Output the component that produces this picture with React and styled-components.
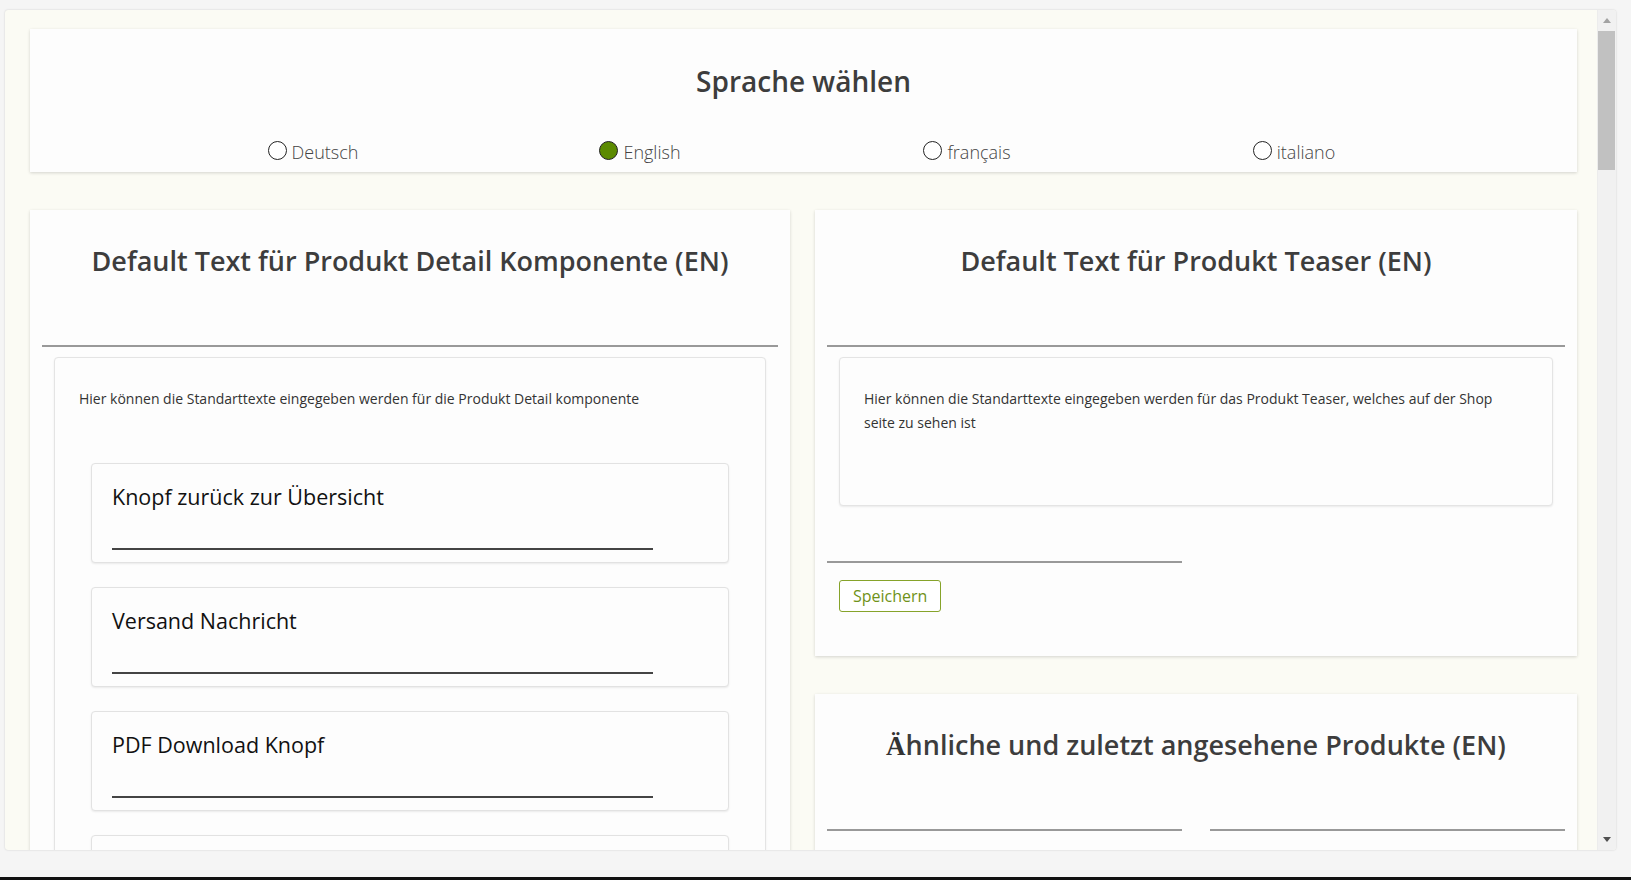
import React from "react";
import styled, { createGlobalStyle } from "styled-components";

const GlobalStyle = createGlobalStyle`
  html, body {
    margin: 0;
    padding: 0;
    height: 100%;
    background: #f5f5f5;
    font-family: "Open Sans", "Liberation Sans", sans-serif;
  }
  #root {
    height: 100%;
  }
  * {
    box-sizing: border-box;
  }
`;

const languages = [
  { label: "Deutsch", checked: false },
  { label: "English", checked: true },
  { label: "français", checked: false },
  { label: "italiano", checked: false },
];

const detailFields = [
  "Knopf zurück zur Übersicht",
  "Versand Nachricht",
  "PDF Download Knopf",
  "",
];

const App = () => {
  return (
    <>
      <GlobalStyle />
      <Page>
        <Frame>
          <Content>
            <LanguageCard>
              <LanguageTitle>Sprache wählen</LanguageTitle>
              <RadioRow>
                {languages.map(lang => (
                  <RadioItem key={lang.label}>
                    <RadioDot checked={lang.checked} />
                    <RadioLabel>{lang.label}</RadioLabel>
                  </RadioItem>
                ))}
              </RadioRow>
            </LanguageCard>

            <Columns>
              <Column>
                <Card>
                  <CardHeader>
                    <CardTitle>Default Text für Produkt Detail Komponente (EN)</CardTitle>
                  </CardHeader>
                  <Divider />
                  <InnerBox>
                    <Description>
                      Hier können die Standarttexte eingegeben werden für die Produkt Detail komponente
                    </Description>
                    <FieldList>
                      {detailFields.map((label, index) => (
                        <FieldCard key={index}>
                          <FieldLabel>{label}</FieldLabel>
                          <FieldLine />
                        </FieldCard>
                      ))}
                    </FieldList>
                  </InnerBox>
                </Card>
              </Column>

              <Column>
                <Card bottom="44px">
                  <CardHeader>
                    <CardTitle>Default Text für Produkt Teaser (EN)</CardTitle>
                  </CardHeader>
                  <Divider />
                  <InnerBox tall>
                    <Description>
                      Hier können die Standarttexte eingegeben werden für das Produkt Teaser, welches auf der Shop seite zu sehen ist
                    </Description>
                  </InnerBox>
                  <HalfRow top="55px">
                    <HalfLine />
                  </HalfRow>
                  <SaveButton>Speichern</SaveButton>
                </Card>

                <Card bottom="60px">
                  <CardHeader>
                    <CardTitle>
                      <SerifGlyph>Ä</SerifGlyph>hnliche und zuletzt angesehene Produkte (EN)
                    </CardTitle>
                  </CardHeader>
                  <HalfRow>
                    <HalfLine />
                    <HalfLine />
                  </HalfRow>
                </Card>
              </Column>
            </Columns>
          </Content>

          <Scrollbar>
            <ScrollArrow up />
            <ScrollThumb />
            <ScrollTrack />
            <ScrollArrow />
          </Scrollbar>
        </Frame>
        <BottomBar />
      </Page>
    </>
  );
};

const Page = styled.div`
  height: 100%;
  display: flex;
  flex-direction: column;
  padding: 10px 15px 0 5px;
`;

const Frame = styled.div`
  height: 840px;
  display: flex;
  background: #fbfbf4;
  border-radius: 3px;
  box-shadow: 0 0 2px rgba(0, 0, 0, 0.18);
  overflow: hidden;
`;

const Content = styled.div`
  flex: 1;
  overflow: hidden;
  padding: 19px 20px 0 25px;
`;

const LanguageCard = styled.section`
  background: #fdfdfd;
  box-shadow: 0 1px 3px rgba(0, 0, 0, 0.16);
  height: 143px;
  padding-top: 32px;
  text-align: center;
`;

const LanguageTitle = styled.h1`
  margin: 0;
  font-size: 28px;
  line-height: 40px;
  font-weight: 600;
  color: #3d3d3d;
`;

const RadioRow = styled.div`
  width: 1308px;
  margin: 39px auto 0;
  display: grid;
  grid-template-columns: repeat(4, 1fr);
`;

const RadioItem = styled.label`
  display: flex;
  align-items: center;
  justify-content: center;
  gap: 5px;
`;

const RadioDot = styled.span`
  width: 19px;
  height: 19px;
  border-radius: 50%;
  border: 1.2px solid #222;
  background: ${props => (props.checked ? "#5b8a00" : "#fff")};
  margin-top: -4px;
`;

const RadioLabel = styled.span`
  font-size: 18px;
  line-height: 24px;
  font-weight: 300;
  color: #444;
`;

const Columns = styled.div`
  display: grid;
  grid-template-columns: 760px 762px;
  gap: 25px;
  margin-top: 38px;
  align-items: start;
`;

const Column = styled.div`
  display: flex;
  flex-direction: column;
  gap: 38px;
`;

const Card = styled.section`
  background: #fdfdfd;
  box-shadow: 0 1px 3px rgba(0, 0, 0, 0.16);
  padding: 0 12px ${props => props.bottom || "0"};
`;

const CardHeader = styled.div`
  height: 135px;
  padding-top: 32px;
  text-align: center;
`;

const CardTitle = styled.h2`
  margin: 0;
  font-size: 27px;
  line-height: 38px;
  font-weight: 600;
  color: #3d3d3d;
`;

const SerifGlyph = styled.span`
  font-family: "Liberation Serif", "DejaVu Serif", serif;
  font-weight: 700;
  color: #333;
`;

const Divider = styled.hr`
  margin: 0;
  border: none;
  height: 2px;
  background: #999;
`;

const InnerBox = styled.div`
  margin: 10px 12px 0;
  min-height: ${props => (props.tall ? "149px" : "0")};
  padding: 29px 26px 0 24px;
  background: #fdfdfd;
  border: 1px solid #e4e4e4;
  border-radius: 4px;
  box-shadow: 0 1px 2px rgba(0, 0, 0, 0.08);
`;

const Description = styled.p`
  margin: 0;
  font-size: 14px;
  line-height: 24px;
  color: #333;
`;

const FieldList = styled.div`
  display: flex;
  flex-direction: column;
  gap: 24px;
  margin: 52px 10px 0 12px;
`;

const FieldCard = styled.div`
  height: 100px;
  padding: 18px 20px 0;
  background: #fdfdfd;
  border: 1px solid #e2e2e2;
  border-radius: 4px;
  box-shadow: 0 1px 2px rgba(0, 0, 0, 0.08);
`;

const FieldLabel = styled.div`
  height: 30px;
  font-size: 21.5px;
  line-height: 30px;
  color: #111;
`;

const FieldLine = styled.div`
  width: 541px;
  height: 2px;
  margin-top: 36px;
  background: #444;
`;

const HalfRow = styled.div`
  display: grid;
  grid-template-columns: 355px 355px;
  justify-content: space-between;
  margin-top: ${props => props.top || "0"};
`;

const HalfLine = styled.div`
  height: 2px;
  background: #999;
`;

const SaveButton = styled.button`
  margin: 17px 0 0 12px;
  height: 32px;
  padding: 0 13px;
  background: #fff;
  border: 1px solid #86a32a;
  border-radius: 3px;
  font-family: "Open Sans", sans-serif;
  font-size: 16px;
  color: #6f9218;
`;

const Scrollbar = styled.div`
  width: 19px;
  display: flex;
  flex-direction: column;
  background: #f1f1f1;
  border-left: 1px solid #ececec;
`;

const ScrollArrow = styled.div`
  height: 21px;
  display: flex;
  align-items: center;
  justify-content: center;

  &::before {
    content: "";
    border-left: 4px solid transparent;
    border-right: 4px solid transparent;
    ${props =>
      props.up
        ? "border-bottom: 5px solid #a3a3a3;"
        : "border-top: 5px solid #505050;"}
  }
`;

const ScrollThumb = styled.div`
  height: 139px;
  margin: 0 1px 0 0;
  background: #c1c1c1;
`;

const ScrollTrack = styled.div`
  flex: 1;
`;

const BottomBar = styled.div`
  margin: auto -15px 0 -5px;
  height: 3px;
  background: #111;
`;

export default App;
